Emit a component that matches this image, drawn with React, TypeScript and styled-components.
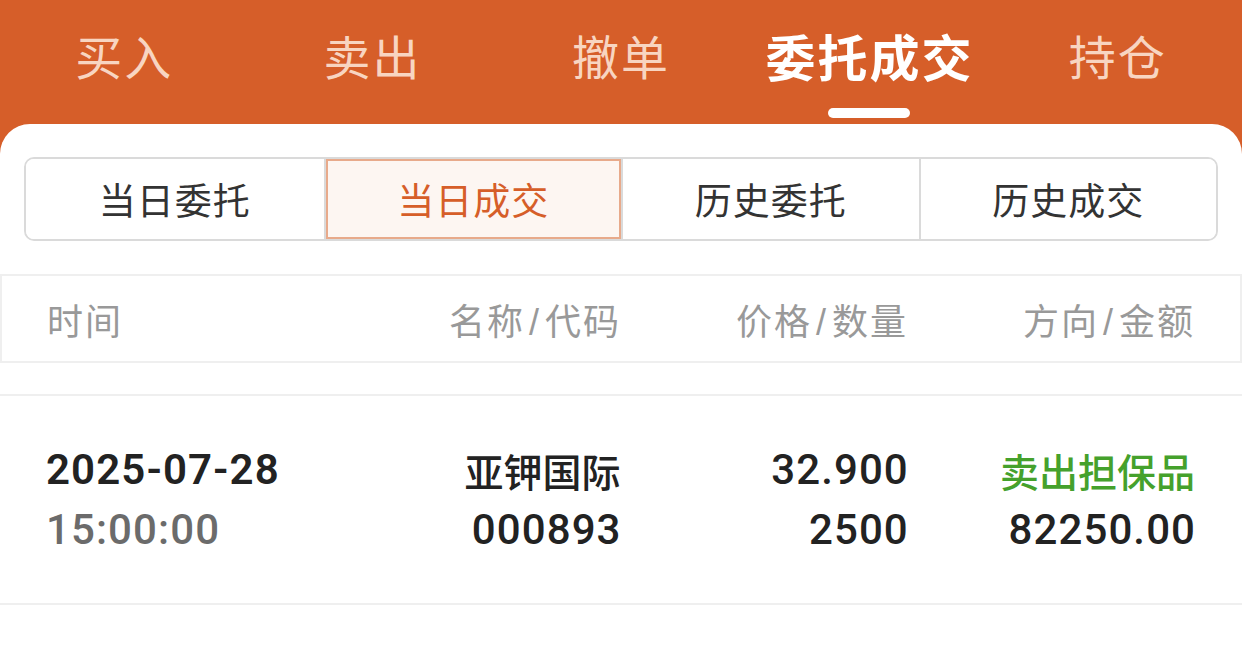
import styled, { createGlobalStyle } from "styled-components";

const ORANGE = "#D65E29";
const LINE = "#EFEFEF";

const GlobalStyle = createGlobalStyle`
  html, body {
    margin: 0;
    padding: 0;
    background: #fff;
  }

  body {
    font-family: "Noto Sans CJK SC", "Noto Sans", sans-serif;
  }
`;

const Page = styled.div`
  display: flex;
  flex-direction: column;
  min-height: 100vh;
  background: ${ORANGE};
`;

const TabBar = styled.nav`
  display: grid;
  grid-template-columns: repeat(5, 1fr);
  height: 124px;
`;

const Tab = styled.div<{ $active: boolean }>`
  display: flex;
  flex-direction: column;
  align-items: center;
  padding-top: 25px;
  line-height: 60px;
  letter-spacing: 2px;
  font-size: ${({ $active }) => ($active ? "50px" : "47px")};
  font-weight: ${({ $active }) => ($active ? 700 : 400)};
  color: ${({ $active }) => ($active ? "#fff" : "#F8D5C1")};
`;

const Indicator = styled.span`
  display: block;
  width: 82px;
  height: 10px;
  margin-top: 23px;
  border-radius: 5px;
  background: #fff;
`;

const Card = styled.main`
  flex: 1;
  background: #fff;
  border-radius: 30px 30px 0 0;
  padding-top: 33px;
`;

const Segment = styled.div`
  display: grid;
  grid-template-columns: repeat(4, 1fr);
  height: 84px;
  margin: 0 24px;
  box-sizing: border-box;
  border: 2px solid #dadada;
  border-radius: 10px;
  overflow: hidden;
`;

const SegItem = styled.div<{ $active: boolean }>`
  display: flex;
  align-items: center;
  justify-content: center;
  font-size: 37px;
  letter-spacing: 1px;
  border-left: 2px solid #dadada;
  color: ${({ $active }) => ($active ? ORANGE : "#333")};
  background: ${({ $active }) => ($active ? "#FDF6F2" : "#fff")};
  box-shadow: ${({ $active }) =>
    $active ? "inset 0 0 0 2px #E8AA8B" : "none"};

  &:first-child {
    border-left: none;
  }
`;

const TableHead = styled.div`
  display: grid;
  grid-template-columns: repeat(4, 1fr);
  align-items: center;
  height: 89px;
  margin-top: 33px;
  padding: 0 45px 0 45px;
  box-sizing: border-box;
  border: 2px solid ${LINE};
  color: #999;
  font-size: 36px;
  letter-spacing: 2px;
`;

const HeadCell = styled.div<{ $align: "left" | "right" }>`
  text-align: ${({ $align }) => $align};
`;

const Slash = styled.span`
  font-family: "Liberation Sans", sans-serif;
  margin: 0 4px;
`;

const List = styled.div`
  margin-top: 31px;
  border-top: 2px solid ${LINE};
`;

const Row = styled.div`
  display: grid;
  grid-template-columns: repeat(4, 1fr);
  padding: 44px 47px 43px 46px;
  border-bottom: 2px solid ${LINE};
`;

const Cell = styled.div<{ $align: "left" | "right" }>`
  display: flex;
  flex-direction: column;
  align-items: ${({ $align }) => ($align === "left" ? "flex-start" : "flex-end")};
`;

const Value = styled.span<{ $num?: boolean; $weight?: number; $color?: string }>`
  line-height: 60px;
  white-space: nowrap;
  font-family: ${({ $num }) =>
    $num
      ? `Roboto, "Liberation Sans", "Noto Sans CJK SC", sans-serif`
      : `"Noto Sans CJK SC", sans-serif`};
  font-size: ${({ $num }) => ($num ? "42px" : "39px")};
  letter-spacing: ${({ $num }) => ($num ? "1.1px" : "0")};
  margin-right: ${({ $num }) => ($num ? "-1.1px" : "0")};
  font-weight: ${({ $weight }) => $weight || 400};
  color: ${({ $color }) => $color || "#222"};
`;

const tabs = ["买入", "卖出", "撤单", "委托成交", "持仓"];
const segments = ["当日委托", "当日成交", "历史委托", "历史成交"];
const headers: [string, string | null][] = [
  ["时间", null],
  ["名称", "代码"],
  ["价格", "数量"],
  ["方向", "金额"],
];

const trade = {
  date: "2025-07-28",
  time: "15:00:00",
  name: "亚钾国际",
  code: "000893",
  price: "32.900",
  qty: "2500",
  side: "卖出担保品",
  amount: "82250.00",
};

function App() {
  return (
    <>
      <GlobalStyle />
      <Page>
        <TabBar>
          {tabs.map((t) => (
            <Tab key={t} $active={t === "委托成交"}>
              {t}
              {t === "委托成交" && <Indicator />}
            </Tab>
          ))}
        </TabBar>
        <Card>
          <Segment>
            {segments.map((s) => (
              <SegItem key={s} $active={s === "当日成交"}>
                {s}
              </SegItem>
            ))}
          </Segment>

          <TableHead>
            {headers.map(([a, b], i) => (
              <HeadCell key={a} $align={i === 0 ? "left" : "right"}>
                {a}
                {b && (
                  <>
                    <Slash>/</Slash>
                    {b}
                  </>
                )}
              </HeadCell>
            ))}
          </TableHead>

          <List>
            <Row>
              <Cell $align="left">
                <Value $num $weight={600}>
                  {trade.date}
                </Value>
                <Value $num $weight={500} $color="#6B6B6B">
                  {trade.time}
                </Value>
              </Cell>
              <Cell $align="right">
                <Value $weight={500}>{trade.name}</Value>
                <Value $num $weight={500}>
                  {trade.code}
                </Value>
              </Cell>
              <Cell $align="right">
                <Value $num $weight={500}>
                  {trade.price}
                </Value>
                <Value $num $weight={500}>
                  {trade.qty}
                </Value>
              </Cell>
              <Cell $align="right">
                <Value $weight={500} $color="#45A12C">
                  {trade.side}
                </Value>
                <Value $num $weight={500}>
                  {trade.amount}
                </Value>
              </Cell>
            </Row>
          </List>
        </Card>
      </Page>
    </>
  );
}

export default App;
